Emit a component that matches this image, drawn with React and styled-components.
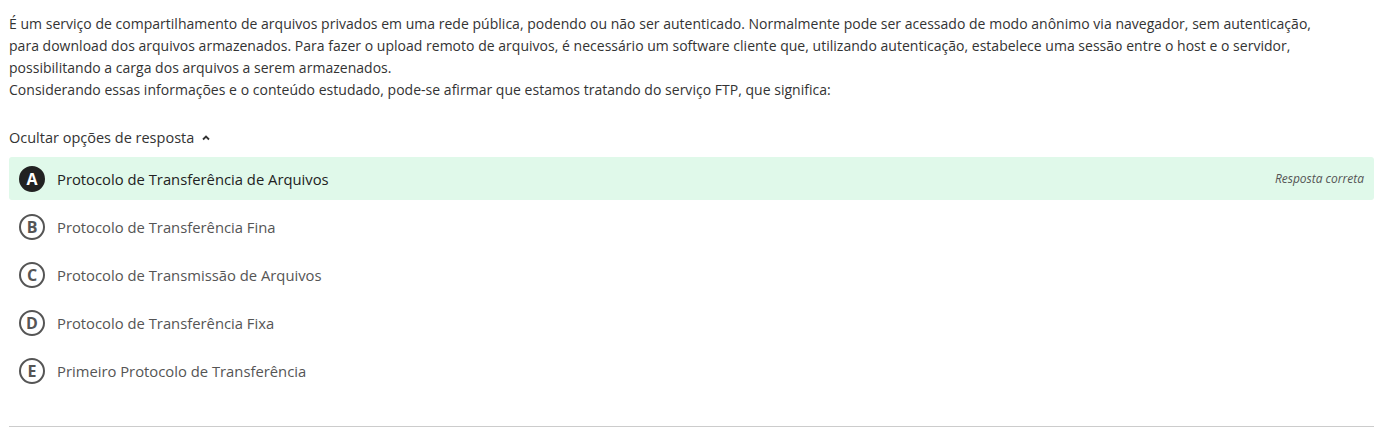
import React from 'react';
import styled, { createGlobalStyle } from 'styled-components';

const GlobalStyle = createGlobalStyle`
	body {
		margin: 0;
		background: #fff;
		font-family: "Open Sans", "Noto Sans", sans-serif;
		color: #333;
	}
`;

const options = [
	{ letter: 'A', text: 'Protocolo de Transferência de Arquivos', correct: true },
	{ letter: 'B', text: 'Protocolo de Transferência Fina' },
	{ letter: 'C', text: 'Protocolo de Transmissão de Arquivos' },
	{ letter: 'D', text: 'Protocolo de Transferência Fixa' },
	{ letter: 'E', text: 'Primeiro Protocolo de Transferência' },
];

function App() {
	return (
		<Container>
			<GlobalStyle />
			<Statement>
				É um serviço de compartilhamento de arquivos privados em uma rede pública, podendo ou não ser autenticado. Normalmente pode ser acessado de modo anônimo via navegador, sem autenticação, para download dos arquivos armazenados. Para fazer o upload remoto de arquivos, é necessário um software cliente que, utilizando autenticação, estabelece uma sessão entre o host e o servidor, possibilitando a carga dos arquivos a serem armazenados.
				<br />
				Considerando essas informações e o conteúdo estudado, pode-se afirmar que estamos tratando do serviço FTP, que significa:
			</Statement>
			<Toggle>
				Ocultar opções de resposta
				<svg width="10" height="8" viewBox="0 0 10 8">
					<path d="M2 5.5 L5 2.5 L8 5.5" fill="none" stroke="#333" strokeWidth="1.8" />
				</svg>
			</Toggle>
			<List>
				{options.map((o) => (
					<Option key={o.letter} $correct={o.correct}>
						<Letter $correct={o.correct}>{o.letter}</Letter>
						<OptionText $correct={o.correct}>{o.text}</OptionText>
						{o.correct && <Feedback>Resposta correta</Feedback>}
					</Option>
				))}
			</List>
			<Divider />
		</Container>
	);
}

const Container = styled.div`
	padding: 13px 11px 0 9px;
	width: 1385px;
	box-sizing: border-box;
`;

const Statement = styled.p`
	margin: 0;
	max-width: 1328px;
	font-size: 14px;
	line-height: 22px;
	letter-spacing: 0.02px;
	color: #333;
`;

const Toggle = styled.div`
	margin-top: 27px;
	display: flex;
	align-items: center;
	gap: 7px;
	font-size: 14.5px;
	line-height: 20px;
	color: #333;
`;

const List = styled.div`
	margin-top: 9px;
	display: flex;
	flex-direction: column;
	gap: 5px;
`;

const Option = styled.div`
	display: flex;
	align-items: center;
	height: 43px;
	padding: 0 10px;
	border-radius: 3px;
	background: ${(p) => (p.$correct ? '#e0f9ea' : 'transparent')};
`;

const Letter = styled.span`
	flex: none;
	width: 26px;
	height: 26px;
	box-sizing: border-box;
	border-radius: 50%;
	display: flex;
	align-items: center;
	justify-content: center;
	font-size: 16px;
	font-weight: 700;
	background: ${(p) => (p.$correct ? '#222' : 'transparent')};
	color: ${(p) => (p.$correct ? '#fff' : '#555')};
	border: 2px solid ${(p) => (p.$correct ? '#222' : '#555')};
`;

const OptionText = styled.span`
	margin-left: 12px;
	font-size: 14.8px;
	color: ${(p) => (p.$correct ? '#222' : '#555')};
	flex: 1;
`;

const Feedback = styled.span`
	font-size: 12px;
	font-style: italic;
	color: #555;
`;

const Divider = styled.hr`
	margin: 34px 0 0;
	border: none;
	border-top: 1px solid #ccc;
`;

export default App;
